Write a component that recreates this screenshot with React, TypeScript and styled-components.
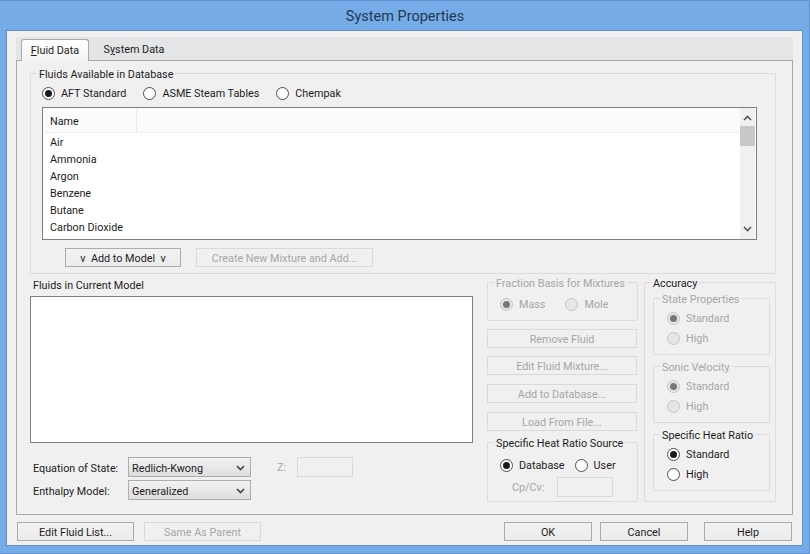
import styled, { createGlobalStyle } from "styled-components";

const GlobalStyle = createGlobalStyle`
  * { box-sizing: border-box; }
  html, body { margin: 0; padding: 0; }
  body {
    font-family: Roboto, "Open Sans", "Liberation Sans", sans-serif;
    font-size: 10.8px;
    color: #1c1c1c;
  }
`;

const Window = styled.div`
  width: 810px;
  height: 554px;
  display: flex;
  flex-direction: column;
  padding: 0 7px 8px 7px;
  background: #75ace8;
  border: 1px solid #5c93d0;
  border-width: 1px 1px 1px 0;
  overflow: hidden;
`;

const TitleBar = styled.div`
  height: 30px;
  flex: none;
  margin-right: -1px;
  display: flex;
  align-items: center;
  justify-content: center;
  font-size: 14.5px;
  color: #24384f;
`;

const Client = styled.div`
  flex: 1;
  padding: 6px 9px 0 9px;
  background: #f0f0f0;
  outline: 1px solid #5f90c6;
`;

const TabStrip = styled.div`
  height: 23px;
  display: flex;
  align-items: flex-end;
  padding-left: 5px;
  background: #e3e5e6;
`;

const Tab = styled.div<{ $active?: boolean }>`
  height: 22px;
  width: ${(p) => (p.$active ? "68px" : "90px")};
  display: flex;
  align-items: center;
  justify-content: center;
  padding-bottom: 1px;
  margin-bottom: -1px;
  position: relative;
  z-index: 1;
  ${(p) =>
    p.$active &&
    `
    border: 1px solid #a9a9a9;
    border-bottom: 0;
    border-radius: 3px 3px 0 0;
    background: linear-gradient(#ffffff, #f3f3f3);
  `}
`;

const Panel = styled.div`
  height: 455px;
  padding: 4px 16px 0 13px;
  border: 1px solid #a9a9a9;
  background: #f0f0f0;
`;

const Group = styled.fieldset<{ $enabled?: boolean }>`
  margin: 0;
  padding: 0;
  min-width: 0;
  border: 1px solid #dcdcdc;
  border-radius: 1px;
  color: ${(p) => (p.$enabled ? "#1c1c1c" : "#a6a6a6")};
`;

const Legend = styled.legend`
  margin-left: 6px;
  padding: 0 2px;
  height: 16px;
  line-height: 19px;
  white-space: nowrap;
`;

const AccuracyLegend = styled(Legend)`
  margin-left: -2px;
`;

const DatabaseGroup = styled(Group)`
  height: 209px;
`;

const RadioRow = styled.div<{ $top?: number; $left?: number; $gap?: number }>`
  display: flex;
  height: 16px;
  align-items: center;
  margin-top: ${(p) => p.$top ?? 4}px;
  padding-left: ${(p) => p.$left ?? 0}px;
  gap: ${(p) => p.$gap ?? 17}px;
`;

const RadioLabel = styled.label`
  display: flex;
  align-items: center;
  gap: 6px;
  white-space: nowrap;
`;

const RadioDot = styled.span<{ $on?: boolean; $off?: boolean }>`
  width: 13px;
  height: 13px;
  flex: none;
  border-radius: 50%;
  border: 1px solid ${(p) => (p.$off ? "#c4c4c4" : "#4d4d4d")};
  background: ${(p) => (p.$off ? "#e6e6e6" : "#ffffff")};
  display: flex;
  align-items: center;
  justify-content: center;
  &::after {
    content: "";
    display: ${(p) => (p.$on ? "block" : "none")};
    width: 7px;
    height: 7px;
    border-radius: 50%;
    background: ${(p) => (p.$off ? "#777777" : "#1a1a1a")};
  }
`;

const ListBox = styled.div`
  margin: 6px 18px 0 11px;
  height: 133px;
  border: 1px solid #7f7f7f;
  background: #ffffff;
  display: flex;
`;

const ListBody = styled.div`
  flex: 1;
  min-width: 0;
`;

const HeaderRow = styled.div`
  height: 25px;
  display: flex;
  background: #fbfbfb;
  border-bottom: 1px solid #f0f0f0;
`;

const HeaderCell = styled.div`
  width: 94px;
  padding: 3px 0 0 7px;
  display: flex;
  align-items: center;
  border-right: 1px solid #ececec;
`;

const ListRow = styled.div`
  height: 17px;
  line-height: 20px;
  padding-left: 7px;
`;

const ScrollBar = styled.div`
  width: 15px;
  margin-right: 1px;
  background: #f0f0f0;
  display: flex;
  flex-direction: column;
  align-items: center;
`;

const ScrollArrow = styled.svg<{ $push?: boolean }>`
  width: 9px;
  height: 6px;
  margin-top: ${(p) => (p.$push ? "auto" : "7px")};
  margin-bottom: ${(p) => (p.$push ? "7px" : "5px")};
  flex: none;
`;

const ScrollThumb = styled.div`
  width: 15px;
  height: 20px;
  background: #c8c8c8;
`;

const ButtonRow = styled.div`
  display: flex;
  gap: 15px;
  margin: 8px 0 0 34px;
`;

const Button = styled.button<{ $width: number }>`
  width: ${(p) => p.$width}px;
  height: 19px;
  padding: 2px 0 0;
  font: inherit;
  color: #1c1c1c;
  border: 1px solid #ababab;
  background: linear-gradient(#f2f2f2, #ebebeb);
  &:disabled {
    color: #a6a6a6;
    border-color: #d9d9d9;
    background: #f0f0f0;
  }
`;

const LowerRow = styled.div`
  display: flex;
`;

const LeftColumn = styled.div`
  width: 443px;
  flex: none;
  padding-top: 3px;
  margin-right: 14px;
`;

const CaptionText = styled.div`
  height: 16px;
  line-height: 17px;
  padding-left: 3px;
`;

const ModelBox = styled.div`
  height: 147px;
  margin-top: 3px;
  border: 1px solid #7f7f7f;
  background: #ffffff;
`;

const FormGrid = styled.div`
  margin-top: 14px;
  padding-left: 3px;
  display: grid;
  grid-template-columns: 95px 123px auto;
  grid-auto-rows: 20px;
  row-gap: 3px;
  align-items: center;
`;

const FormLabel = styled.span`
  padding-top: 2px;
`;

const SelectBox = styled.div`
  height: 20px;
  padding: 2px 5px 0 3px;
  display: flex;
  align-items: center;
  justify-content: space-between;
  border: 1px solid #acacac;
  background: linear-gradient(#f3f3f3, #dedede);
`;

const SelectChevron = styled.svg`
  width: 9px;
  height: 6px;
`;

const ZField = styled.div`
  display: flex;
  align-items: center;
  gap: 11px;
  margin-left: 26px;
  color: #a6a6a6;
`;

const ValueInput = styled.div<{ $width: number }>`
  width: ${(p) => p.$width}px;
  height: 20px;
  border: 1px solid #d9d9d9;
  background: #f0f0f0;
`;

const MiddleColumn = styled.div`
  width: 151px;
  flex: none;
  margin-right: 6px;
`;

const FractionGroup = styled(Group)`
  padding-bottom: 8px;
`;

const ActionStack = styled.div`
  margin-top: 8px;
  display: flex;
  flex-direction: column;
  & > * + * { margin-top: 9px; }
  & > :nth-child(2) { margin-top: 8px; }
`;

const SourceGroup = styled(Group)`
  margin-top: 3px;
  padding-bottom: 4px;
`;

const CpRow = styled.div`
  margin-top: 4px;
  display: flex;
  align-items: center;
  gap: 13px;
  padding-left: 24px;
  color: #a6a6a6;
`;

const AccuracyGroup = styled(Group)`
  width: 132px;
  flex: none;
  height: 228px;
  padding: 0 5px 0 8px;
`;

const InnerGroup = styled(Group)<{ $top?: number }>`
  margin-top: ${(p) => p.$top ?? 0}px;
  padding-bottom: 8px;
`;

const BottomBar = styled.div`
  margin-top: 7px;
  display: flex;
  gap: 10px;
  padding: 0 1px;
`;

const BottomRight = styled.div`
  margin-left: auto;
  display: flex;
  gap: 8px;
`;

const HelpButton = styled(Button)`
  margin-left: 8px;
`;

const Accel = styled.span`
  text-decoration: underline;
`;

const fluids = ["Air", "Ammonia", "Argon", "Benzene", "Butane", "Carbon Dioxide"];

function Radio(props: { label: string; on?: boolean; off?: boolean }) {
  return (
    <RadioLabel>
      <RadioDot $on={props.on} $off={props.off} />
      {props.label}
    </RadioLabel>
  );
}

function PrecisionRadios(props: { off?: boolean }) {
  return (
    <>
      <RadioRow $left={13}>
        <Radio label="Standard" on off={props.off} />
      </RadioRow>
      <RadioRow $left={13}>
        <Radio label="High" off={props.off} />
      </RadioRow>
    </>
  );
}

function Select(props: { value: string }) {
  return (
    <SelectBox>
      {props.value}
      <SelectChevron viewBox="0 0 9 6">
        <path d="M1 1 L4.5 4.5 L8 1" fill="none" stroke="#444" strokeWidth="1.6" />
      </SelectChevron>
    </SelectBox>
  );
}

export default function App() {
  return (
    <Window>
      <GlobalStyle />
      <TitleBar>System Properties</TitleBar>
      <Client>
        <TabStrip>
          <Tab $active>
            <span>
              <Accel>F</Accel>luid Data
            </span>
          </Tab>
          <Tab>
            <span>
              S<Accel>y</Accel>stem Data
            </span>
          </Tab>
        </TabStrip>
        <Panel>
          <DatabaseGroup $enabled>
            <Legend>Fluids Available in Database</Legend>
            <RadioRow $left={11}>
              <Radio label="AFT Standard" on />
              <Radio label="ASME Steam Tables" />
              <Radio label="Chempak" />
            </RadioRow>
            <ListBox>
              <ListBody>
                <HeaderRow>
                  <HeaderCell>Name</HeaderCell>
                </HeaderRow>
                {fluids.map((f) => (
                  <ListRow key={f}>{f}</ListRow>
                ))}
              </ListBody>
              <ScrollBar>
                <ScrollArrow viewBox="0 0 9 6">
                  <path d="M1 5 L4.5 1.5 L8 5" fill="none" stroke="#555" strokeWidth="1.6" />
                </ScrollArrow>
                <ScrollThumb />
                <ScrollArrow viewBox="0 0 9 6" $push>
                  <path d="M1 1 L4.5 4.5 L8 1" fill="none" stroke="#555" strokeWidth="1.6" />
                </ScrollArrow>
              </ScrollBar>
            </ListBox>
            <ButtonRow>
              <Button $width={116}>v&nbsp; Add to Model &nbsp;v</Button>
              <Button $width={177} disabled>
                Create New Mixture and Add...
              </Button>
            </ButtonRow>
          </DatabaseGroup>
          <LowerRow>
            <LeftColumn>
              <CaptionText>Fluids in Current Model</CaptionText>
              <ModelBox />
              <FormGrid>
                <FormLabel>Equation of State:</FormLabel>
                <Select value="Redlich-Kwong" />
                <ZField>
                  Z:
                  <ValueInput $width={56} />
                </ZField>
                <FormLabel>Enthalpy Model:</FormLabel>
                <Select value="Generalized" />
              </FormGrid>
            </LeftColumn>
            <MiddleColumn>
              <FractionGroup>
                <Legend>Fraction Basis for Mixtures</Legend>
                <RadioRow $top={6} $left={12} $gap={20}>
                  <Radio label="Mass" on off />
                  <Radio label="Mole" off />
                </RadioRow>
              </FractionGroup>
              <ActionStack>
                <Button $width={150} disabled>Remove Fluid</Button>
                <Button $width={150} disabled>Edit Fluid Mixture...</Button>
                <Button $width={150} disabled>Add to Database...</Button>
                <Button $width={150} disabled>Load From File...</Button>
              </ActionStack>
              <SourceGroup $enabled>
                <Legend>Specific Heat Ratio Source</Legend>
                <RadioRow $top={7} $left={12} $gap={10}>
                  <Radio label="Database" on />
                  <Radio label="User" />
                </RadioRow>
                <CpRow>
                  Cp/Cv:
                  <ValueInput $width={56} />
                </CpRow>
              </SourceGroup>
            </MiddleColumn>
            <AccuracyGroup $enabled>
              <AccuracyLegend>Accuracy</AccuracyLegend>
              <InnerGroup>
                <Legend>State Properties</Legend>
                <PrecisionRadios off />
              </InnerGroup>
              <InnerGroup $top={3}>
                <Legend>Sonic Velocity</Legend>
                <PrecisionRadios off />
              </InnerGroup>
              <InnerGroup $top={3} $enabled>
                <Legend>Specific Heat Ratio</Legend>
                <PrecisionRadios />
              </InnerGroup>
            </AccuracyGroup>
          </LowerRow>
        </Panel>
        <BottomBar>
          <Button $width={117}>Edit Fluid List...</Button>
          <Button $width={117} disabled>Same As Parent</Button>
          <BottomRight>
            <Button $width={88}>OK</Button>
            <Button $width={88}>Cancel</Button>
            <HelpButton $width={88}>Help</HelpButton>
          </BottomRight>
        </BottomBar>
      </Client>
    </Window>
  );
}
